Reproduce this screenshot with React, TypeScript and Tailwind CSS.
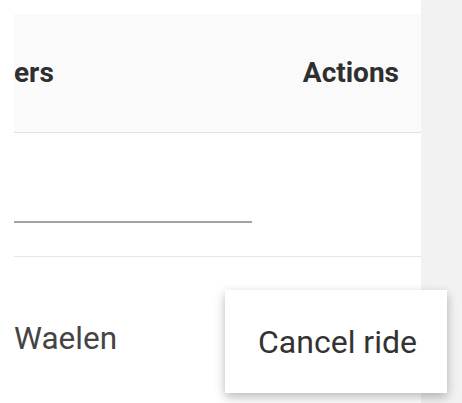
export default function App() {
  return (
    <div className="relative flex h-[403px] w-[462px] overflow-hidden bg-white font-['Roboto',sans-serif]">
      {/* table */}
      <div className="flex w-[421px] flex-col pl-[14px] pt-[14px]">
        <div className="flex h-[119px] items-center justify-between border-b border-[#e2e2e2] bg-[#fafafa] pr-[22px] text-[28px] font-bold text-[#2f2f2f]">
          <span>ers</span>
          <span>Actions</span>
        </div>
        <div className="flex h-[124px] flex-col border-b border-[#e6e6e6] pt-[88px]">
          <div className="h-[2px] w-[238px] bg-[#a3a3a3]" />
        </div>
        <div className="pt-[66px] text-[31.5px] leading-[31px] text-[#444]">Waelen</div>
      </div>

      <div className="flex-1 bg-[#f2f2f2]" />

      {/* menu */}
      <div className="absolute left-[225px] top-[290px] flex h-[103px] w-[222px] items-center bg-white pl-[33px] text-[32px] text-[#333] shadow-[0_4px_10px_rgba(0,0,0,0.28)]">
        Cancel ride
      </div>
    </div>
  );
}
